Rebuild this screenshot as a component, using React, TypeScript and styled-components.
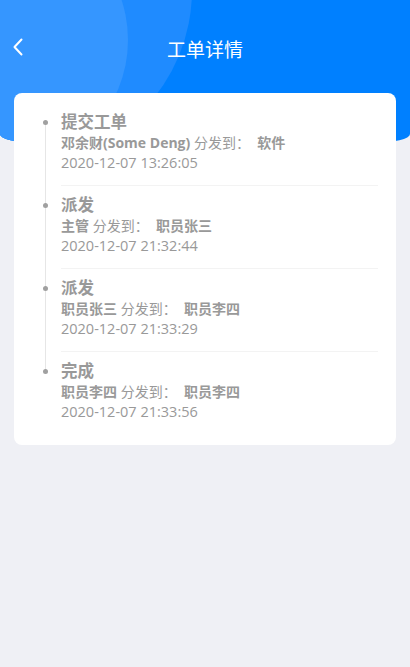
import React from "react";
import styled, { createGlobalStyle } from "styled-components";

const Global = createGlobalStyle`
  html, body { margin: 0; padding: 0; }
  body {
    background: #eff0f5;
    font-family: "Open Sans", "Noto Sans CJK SC", sans-serif;
  }
`;

const Page = styled.div`
  position: relative;
  width: 410px;
  min-height: 667px;
  background: #eff0f5;
  overflow: hidden;
`;

const Header = styled.div`
  position: absolute;
  left: 0;
  top: 0;
  width: 410px;
  height: 143px;
  background: #0080ff;
  border-radius: 0 0 36px 36px / 0 0 9px 9px;
  overflow: hidden;
`;

const Bubble = styled.div<{ $x: number; $y: number; $r: number; $c: string }>`
  position: absolute;
  left: ${(p) => p.$x - p.$r}px;
  top: ${(p) => p.$y - p.$r}px;
  width: ${(p) => p.$r * 2}px;
  height: ${(p) => p.$r * 2}px;
  border-radius: 50%;
  background: ${(p) => p.$c};
`;

const Content = styled.div`
  position: relative;
  display: flex;
  flex-direction: column;
`;

const NavBar = styled.div`
  height: 93px;
  display: flex;
  align-items: flex-start;
  justify-content: center;
  position: relative;
`;

const Title = styled.div`
  margin-top: 36px;
  color: #fff;
  font-size: 19px;
  line-height: 26px;
  font-family: "Noto Sans CJK SC", sans-serif;
`;

const Back = styled.div`
  position: absolute;
  left: 12px;
  top: 38px;
  width: 14px;
  height: 18px;
`;

const Card = styled.div`
  margin: 0 14px;
  background: #fff;
  border-radius: 8px;
  padding: 10px 18px 11px 47px;
`;

const Item = styled.div<{ $last?: boolean }>`
  position: relative;
  padding: 8px 0 12px;
  border-bottom: ${(p) => (p.$last ? "none" : "1px solid #f3f3f3")};

  &::before {
    content: "";
    position: absolute;
    left: -18.5px;
    top: 17px;
    width: 5px;
    height: 5px;
    border-radius: 50%;
    background: #a0a0a0;
    z-index: 1;
  }

  &::after {
    content: "";
    display: ${(p) => (p.$last ? "none" : "block")};
    position: absolute;
    left: -16.5px;
    top: 19px;
    width: 1px;
    height: 100%;
    background: #e6e6e6;
  }
`;

const ItemTitle = styled.div`
  font-size: 16.5px;
  line-height: 22px;
  font-weight: 700;
  color: #999;
`;

const Row = styled.div`
  font-size: 14px;
  line-height: 20px;
  color: #999;
  white-space: pre;
`;

const Strong = styled.span`
  font-weight: 700;
`;

const Time = styled.div`
  font-size: 14.5px;
  line-height: 20px;
  color: #999;
`;

const items = [
  { title: "提交工单", from: "邓余财(Some Deng)", to: "软件", time: "2020-12-07 13:26:05" },
  { title: "派发", from: "主管", to: "职员张三", time: "2020-12-07 21:32:44" },
  { title: "派发", from: "职员张三", to: "职员李四", time: "2020-12-07 21:33:29" },
  { title: "完成", from: "职员李四", to: "职员李四", time: "2020-12-07 21:33:56" },
];

export default function App() {
  return (
    <Page>
      <Global />
      <Header>
        <Bubble $x={20} $y={-10} $r={172} $c="#1f8bff" />
        <Bubble $x={0} $y={40} $r={128} $c="#3596ff" />
      </Header>
      <Content>
        <NavBar>
          <Back>
            <svg width="14" height="18" viewBox="0 0 14 18" fill="none">
              <path d="M9.5 1.5 L2.5 9 L9.5 16.5" stroke="#fff" strokeWidth="2" strokeLinecap="round" strokeLinejoin="round" />
            </svg>
          </Back>
          <Title>工单详情</Title>
        </NavBar>
        <Card>
          {items.map((it, i) => (
            <Item key={i} $last={i === items.length - 1}>
              <ItemTitle>{it.title}</ItemTitle>
              <Row>
                <Strong>{it.from}</Strong>{" 分发到：  "}<Strong>{it.to}</Strong>
              </Row>
              <Time>{it.time}</Time>
            </Item>
          ))}
        </Card>
      </Content>
    </Page>
  );
}
